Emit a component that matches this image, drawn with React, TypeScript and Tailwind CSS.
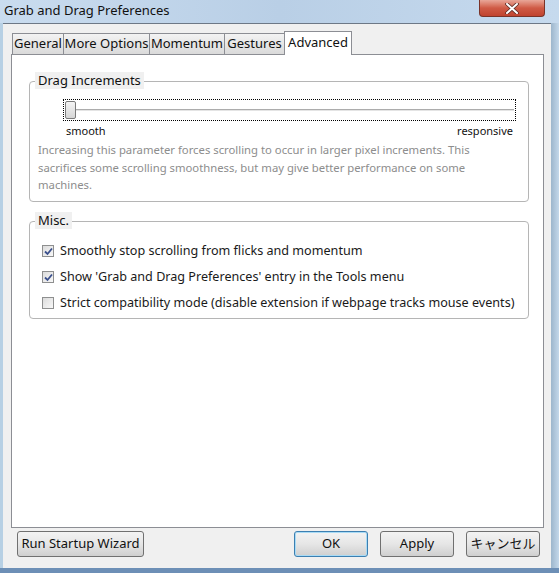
import React from "react";

const font = { fontFamily: '"Noto Sans", "Noto Sans CJK JP", sans-serif' };

const tabs = [
  { label: "General", w: "w-[52px]" },
  { label: "More Options", w: "w-[87px]" },
  { label: "Momentum", w: "w-[76px]" },
  { label: "Gestures", w: "w-[61px]" },
];

function GroupBox({ title, className, children }: { title: string; className: string; children: React.ReactNode }) {
  return (
    <div className={`relative rounded-[4px] border border-[#b5b5b5] ${className}`}>
      <div className="absolute -top-[10px] left-[5px] bg-[#f0f0f0] px-[3px] text-[13px] leading-[17px] text-[#111]">
        {title}
      </div>
      {children}
    </div>
  );
}

function CheckBox({ checked, label }: { checked: boolean; label: string }) {
  return (
    <div className="flex h-[26px] items-center">
      <div className="ml-[12px] flex h-[12px] w-[12px] items-center justify-center border border-[#8e8f8f] bg-gradient-to-br from-[#dcdcdc] to-[#f8f8f8]">
        {checked && (
          <svg width="9" height="9" viewBox="0 0 9 9">
            <path d="M1 4.5 L3.5 7 L8 1.5" fill="none" stroke="#3a4f8c" strokeWidth="1.8" />
          </svg>
        )}
      </div>
      <span className="ml-[6px] text-[12.6px] text-[#1a1a1a]">{label}</span>
    </div>
  );
}

function Button({ label, className }: { label: string; className: string }) {
  return (
    <div
      className={`flex h-[26px] items-center justify-center rounded-[3px] border bg-gradient-to-b from-[#f3f3f3] via-[#e6e6e6] to-[#cfcfcf] text-[13px] text-[#111] ${className}`}
    >
      {label}
    </div>
  );
}

export default function App() {
  return (
    <div
      className="flex h-[573px] w-[559px] flex-col overflow-hidden bg-gradient-to-r from-[#c9dcef] via-[#b9cfe6] to-[#c6daee]"
      style={font}
    >
      {/* title bar */}
      <div className="flex h-[23px] shrink-0 items-start justify-between">
        <span className="ml-[4px] mt-[1px] text-[13px] leading-[18px] text-[#111]">Grab and Drag Preferences</span>
        <div className="mr-[14px] flex h-[17px] w-[66px] items-center justify-center rounded-b-[4px] border border-t-0 border-[#7a3328] bg-gradient-to-b from-[#e8a698] via-[#cf5a45] to-[#c0432f]">
          <svg width="14" height="11" viewBox="0 0 14 11">
            <path d="M2 1 L12 10 M12 1 L2 10" stroke="#5a2a24" strokeWidth="3.6" strokeLinecap="round" />
            <path d="M2 1 L12 10 M12 1 L2 10" stroke="#ffffff" strokeWidth="2" strokeLinecap="round" />
          </svg>
        </div>
      </div>

      <div className="flex h-[545px] shrink-0">
        <div className="w-[3px] bg-[#b7d0e4]" />
        {/* client area */}
        <div className="flex w-[548px] flex-col border-t border-[#6d7886] bg-[#f0f0f0] pl-[8px] pr-[7px]">
          {/* tab strip */}
          <div className="mt-[7px] flex h-[23px] items-end pl-[1px] text-[13px]">
            {tabs.map((t) => (
              <div
                key={t.label}
                className={`-mr-px flex h-[21px] items-center justify-center border border-b-0 border-[#8c8e94] bg-gradient-to-b from-[#f3f3f3] to-[#dadada] text-[#111] ${t.w}`}
              >
                {t.label}
              </div>
            ))}
            <div className="relative z-10 -mb-px flex h-[24px] w-[68px] items-start justify-center border border-b-0 border-[#8c8e94] bg-white pt-[1px] text-[#111]">
              Advanced
            </div>
          </div>

          {/* tab panel */}
          <div className="h-[474px] border border-[#8c8e94] bg-white pl-[17px] pr-[14px] pt-[26px]">
            <GroupBox title="Drag Increments" className="h-[121px]">
              <div className="ml-[33px] mr-[12px] mt-[17px] flex h-[22px] items-center border border-dotted border-black px-[1px]">
                <div className="relative flex h-[18px] w-full items-center">
                  <div className="h-[3px] w-full border-t border-b border-t-[#acacac] border-b-white bg-[#e4e4e4]" />
                  <div className="absolute left-0 top-0 h-[18px] w-[11px] rounded-[2px] border border-[#7a7a7a] bg-gradient-to-b from-[#f4f4f4] to-[#d6d6d6]" />
                </div>
              </div>
              <div className="ml-[36px] mr-[15px] mt-[2px] flex justify-between text-[11px] leading-[16px] text-[#111]">
                <span>smooth</span>
                <span>responsive</span>
              </div>
              <p className="ml-[8px] mr-[10px] mt-[2px] text-[11.3px] leading-[17.5px] text-[#8d8d8d]">
                Increasing this parameter forces scrolling to occur in larger pixel increments. This sacrifices some
                scrolling smoothness, but may give better performance on some machines.
              </p>
            </GroupBox>

            <GroupBox title="Misc." className="mt-[19px] h-[98px]">
              <div className="mt-[16px] flex flex-col">
                <CheckBox checked label="Smoothly stop scrolling from flicks and momentum" />
                <CheckBox checked label="Show 'Grab and Drag Preferences' entry in the Tools menu" />
                <CheckBox
                  checked={false}
                  label="Strict compatibility mode (disable extension if webpage tracks mouse events)"
                />
              </div>
            </GroupBox>
          </div>

          {/* dialog buttons */}
          <div className="mt-[3px] flex items-center">
            <Button label="Run Startup Wizard" className="ml-[6px] w-[127px] border-[#707070]" />
            <div className="flex-1" />
            <Button
              label="OK"
              className="w-[74px] border-[#3c7fb1] shadow-[inset_0_0_0_1px_#a9dbf5]"
            />
            <Button label="Apply" className="ml-[12px] w-[74px] border-[#707070]" />
            <Button label="キャンセル" className="ml-[12px] w-[74px] border-[#707070]" />
            <div className="w-[4px]" />
          </div>
        </div>
        <div className="w-[8px] bg-gradient-to-r from-[#9db6cc] to-[#c4d8ea]" />
      </div>
      <div className="h-[5px] bg-[#6d8fb6]" />
    </div>
  );
}
